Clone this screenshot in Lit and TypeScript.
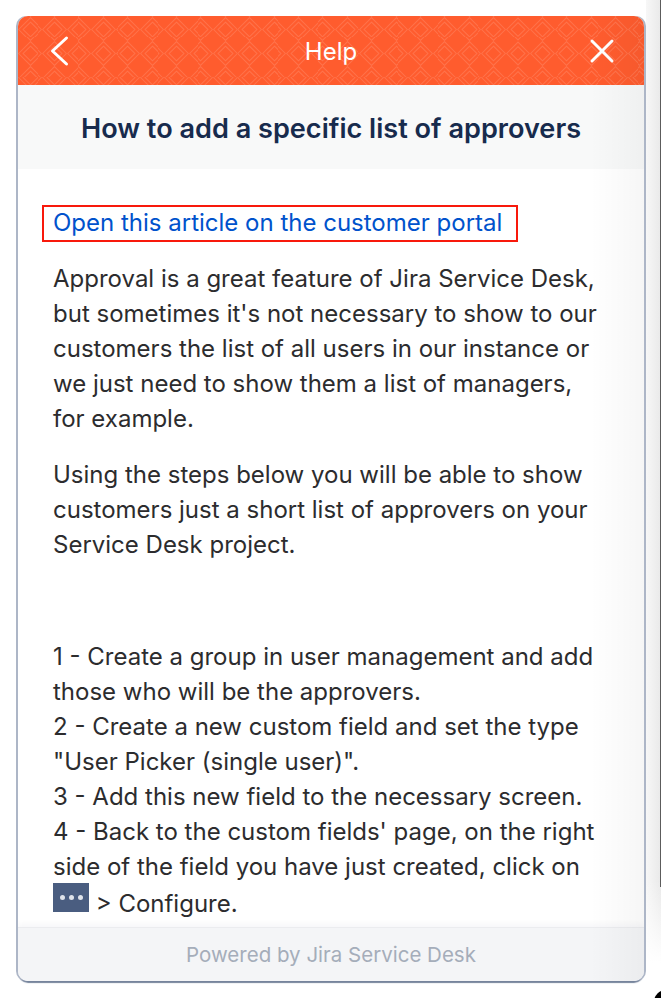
import { LitElement, html, css, svg, unsafeCSS } from "lit";
import { customElement } from "lit/decorators.js";

const pattern = `url("data:image/svg+xml,%3Csvg xmlns='http://www.w3.org/2000/svg' width='24.4' height='24.4'%3E%3Cg fill='none' stroke='%23fff' stroke-opacity='.14'%3E%3Cpath d='M12.2 .6 23.8 12.2 12.2 23.8 .6 12.2Z'/%3E%3Cpath d='M12.2 5 19.4 12.2 12.2 19.4 5 12.2Z'/%3E%3C/g%3E%3C/svg%3E")`;

@customElement("app-root")
export class AppRoot extends LitElement {
  static styles = css`
    :host {
      display: block;
      width: 661px;
      height: 998px;
      overflow: hidden;
      position: relative;
      background: #fff;
      font-family: Inter, "Liberation Sans", sans-serif;
    }
    .gutter {
      position: absolute;
      left: 646px;
      top: 0;
      width: 15px;
      height: 998px;
      background: linear-gradient(90deg, #f7f7f7, #e9e9e9);
    }
    .fade {
      position: absolute;
      left: 646px;
      top: 880px;
      width: 15px;
      height: 118px;
      background: linear-gradient(180deg, rgba(255, 255, 255, 0), #fff 70%);
    }
    .edge {
      position: absolute;
      left: 660px;
      top: 0;
      width: 1px;
      height: 887px;
      background: #5c5c5c;
    }
    .sheen {
      position: absolute;
      left: 590px;
      top: 16px;
      width: 54px;
      height: 965px;
      border-radius: 0 10px 10px 0;
      background: linear-gradient(90deg, transparent, rgba(0, 0, 0, 0.035));
      pointer-events: none;
    }
    .corner {
      position: absolute;
      left: 654px;
      top: 990px;
      width: 30px;
      height: 30px;
      background: #000;
      border-radius: 12px 0 0 0;
    }
    .card {
      position: relative;
      box-sizing: border-box;
      margin: 16px 0 0 18px;
      width: 626px;
      height: 965px;
      border-radius: 10px;
      background: #fff;
      box-shadow: -2px 0 0.5px #adb6c7, 2px 0 0.5px #adb6c7, 0 2px 1px #76849c;
      display: flex;
      flex-direction: column;
      overflow: hidden;
    }
    .header {
      height: 69px;
      flex: none;
      background-color: #ff5c2e;
      background-image: ${unsafeCSS(pattern)};
      background-position: 0 1px;
      display: grid;
      grid-template-columns: 1fr auto 1fr;
      align-items: center;
      padding: 0 29px;
      color: #fff;
      font-size: 24px;
    }
    .header svg { display: block; }
    .header .back { margin-left: 3px; }
    .header .close { justify-self: end; }
    .header span { padding-top: 2px; }
    .title {
      height: 84px;
      flex: none;
      background: #f8f9f9;
      display: flex;
      align-items: center;
      justify-content: center;
      padding-top: 2px;
      box-sizing: border-box;
      color: #172b4d;
      font-size: 27.1px;
      font-weight: 600;
    }
    .body {
      flex: 1;
      min-height: 0;
      overflow: hidden;
      padding: 36px 36px 0 35px;
      color: #2c2c2e;
      font-size: 24px;
      line-height: 35px;
    }
    .link {
      display: block;
      color: #0052cc;
      text-decoration: none;
    }
    .body p { margin: 0 0 21px; }
    .body p.steps { margin: 0; padding-top: 56px; }
    .linkbox {
      position: absolute;
      left: 42px;
      top: 205px;
      width: 476px;
      height: 37px;
      box-sizing: border-box;
      border: 2px solid #f8190c;
    }
    .more {
      display: inline-flex;
      vertical-align: 12px;
      margin-top: -1px;
      align-items: center;
      justify-content: center;
      gap: 4px;
      width: 36px;
      height: 29px;
      background: #4a5d80;
      box-sizing: border-box;
    }
    .more i { width: 5px; height: 5px; border-radius: 50%; background: #dfe3ea; }
    .footer {
      position: relative;
      height: 54px;
      flex: none;
      background: #f4f5f7;
      border-top: 1px solid #ebecef;
      box-shadow: 0 -3px 6px rgba(9, 30, 66, 0.04);
      box-sizing: border-box;
      display: flex;
      align-items: center;
      justify-content: center;
      color: #a5adba;
      font-size: 20.5px;
    }
  `;

  render() {
    return html`
      <div class="gutter"></div>
      <div class="fade"></div>
      <div class="edge"></div>
      <div class="corner"></div>
      <div class="card">
        <div class="header">
          <svg class="back" width="20" height="32" viewBox="0 0 20 32">
            ${svg`<path d="M16.5 3 2.5 16 16.5 29" fill="none" stroke="#fff" stroke-width="3" stroke-linecap="round" stroke-linejoin="round"/>`}
          </svg>
          <span>Help</span>
          <svg class="close" width="26" height="26" viewBox="0 0 26 26">
            ${svg`<path d="M3 3 23 23M23 3 3 23" fill="none" stroke="#fff" stroke-width="3" stroke-linecap="round"/>`}
          </svg>
        </div>
        <div class="title">How to add a specific list of approvers</div>
        <div class="body">
          <p><a class="link" href="#">Open this article on the customer portal</a></p>
          <p>Approval is a great feature of Jira Service Desk, but sometimes it's not necessary to show to our customers the list of all users in our instance or we just need to show them a list of managers, for example.</p>
          <p>Using the steps below you will be able to show customers just a short list of approvers on your Service Desk project.</p>
          <p class="steps">1 - Create a group in user management and add those who will be the approvers.<br />
          2 - Create a new custom field and set the type "User Picker (single user)".<br />
          3 - Add this new field to the necessary screen.<br />
          4 - Back to the custom fields' page, on the right side of the field you have just created, click on<br />
          <span class="more"><i></i><i></i><i></i></span> &gt; Configure.</p>
        </div>
        <div class="footer">Powered by Jira Service Desk</div>
      </div>
      <div class="sheen"></div>
      <div class="linkbox"></div>
    `;
  }
}
